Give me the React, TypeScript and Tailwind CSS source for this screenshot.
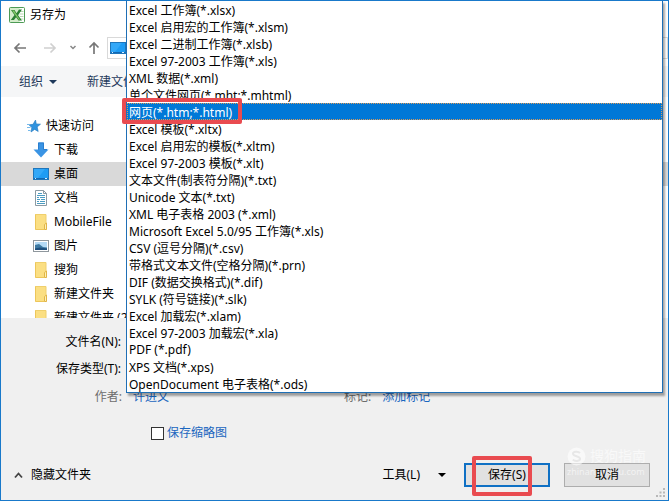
import { useState } from 'react';
import type { ReactNode } from 'react';

const FORMATS = [
  'Excel 工作簿(*.xlsx)',
  'Excel 启用宏的工作簿(*.xlsm)',
  'Excel 二进制工作簿(*.xlsb)',
  'Excel 97-2003 工作簿(*.xls)',
  'XML 数据(*.xml)',
  '单个文件网页(*.mht;*.mhtml)',
  '网页(*.htm;*.html)',
  'Excel 模板(*.xltx)',
  'Excel 启用宏的模板(*.xltm)',
  'Excel 97-2003 模板(*.xlt)',
  '文本文件(制表符分隔)(*.txt)',
  'Unicode 文本(*.txt)',
  'XML 电子表格 2003 (*.xml)',
  'Microsoft Excel 5.0/95 工作簿(*.xls)',
  'CSV (逗号分隔)(*.csv)',
  '带格式文本文件(空格分隔)(*.prn)',
  'DIF (数据交换格式)(*.dif)',
  'SYLK (符号链接)(*.slk)',
  'Excel 加载宏(*.xlam)',
  'Excel 97-2003 加载宏(*.xla)',
  'PDF (*.pdf)',
  'XPS 文档(*.xps)',
  'OpenDocument 电子表格(*.ods)',
];

function ExcelIcon() {
  return (
    <svg width="16" height="16" viewBox="0 0 16 16" fill="none">
      <rect x="0.5" y="0.5" width="15" height="15" rx="1" fill="#d3ecca" stroke="#4d9a55" />
      <path d="M10.500 1h4.500v14h-4.500z" fill="#fff" />
      <path d="M11 4.500h3.500M11 7h3.500M11 9.500h3.500M11 12h3.500" stroke="#b5d8b0" />
      <path d="M2 3h3.500l2 3.200L10 2.500h3L9 8.200l4 5.300H9.500L7.100 10.200 5 13H1.800l3.700-4.900z" fill="#2a7f33" />
      <path d="M3 3.500h2l6 9.300H9.800z" fill="#83c765" />
    </svg>
  );
}

function DesktopIcon() {
  return (
    <svg width="16" height="14" viewBox="0 0 16 14" fill="none" className="shrink-0">
      <rect x="0.5" y="1.500" width="15" height="11" fill="#1e9cf4" stroke="#1f76bb" />
      <path d="M1 2h11L5 11H1z" fill="#41b0fa" opacity="0.6" />
      <path d="M1 11.500h14" stroke="#1268b3" />
      <path d="M2 11.500h1M12 11.500h2" stroke="#d7efff" />
    </svg>
  );
}

function FolderIcon() {
  return (
    <svg width="16" height="16" viewBox="0 0 16 16" fill="none">
      <path d="M2 0.500h11v9l1 1v5H2z" fill="#fbdf83" />
      <path d="M2 0.500h11v9" stroke="#efcf6c" />
      <path d="M2.500 1v14.500h9" stroke="#edc65a" />
      <path d="M11.500 15.500v-5l2-1.500v6.500z" fill="#fff0b4" stroke="#e0b548" />
    </svg>
  );
}

function StarIcon() {
  return (
    <svg width="14" height="14" viewBox="0 0 14 14">
      <path d="M8.500 1l.8 3.900 4.200.3-3.300 2.700 1 4.600-3.600-2.100L4 13l.8-4.400L2 5.800l4-.5z" fill="#2f93df" stroke="#2478bd" strokeWidth="0.6" />
      <path d="M0 5.500h3M0 8.500h3.500M1 11.500h2.500" stroke="#76b9ea" />
    </svg>
  );
}

function DownloadIcon() {
  return (
    <svg width="16" height="16" viewBox="0 0 16 16">
      <path d="M5 .5h6v7h4.500L8 15.500.500 7.500H5z" fill="#3a94e4" />
      <path d="M5.500 7.500V1h5v6.500H14" stroke="#2a7fcf" fill="none" />
    </svg>
  );
}

function DocumentIcon() {
  return (
    <svg width="16" height="16" viewBox="0 0 16 16" fill="none">
      <path d="M2.500.5h8l3 3v12h-11z" fill="#fff" stroke="#8b9aa3" />
      <path d="M10.500.5v3h3" stroke="#8b9aa3" />
      <path d="M5 3.500h4M4 5.500h8M4 7.500h2M7 7.500h5M4 9.500h3M8 9.500h4M4 11.500h2M7 11.500h5M4 13.500h8" stroke="#4b9cc2" />
    </svg>
  );
}

function PictureIcon() {
  return (
    <svg width="16" height="14" viewBox="0 0 16 14" fill="none">
      <rect x="0.5" y="1.500" width="15" height="11" fill="#fff" stroke="#8f979d" />
      <path d="M2 3h12v8H2z" fill="#b4daf5" />
      <path d="M2 6l4-1 4 3 4 .5V11H2z" fill="#3e7aa3" />
      <path d="M2 9.500l5-1 7 1V11H2z" fill="#1f4f7d" />
    </svg>
  );
}

function Arrow({ dir, color }: { dir: 'left' | 'right' | 'up'; color: string }) {
  const paths = {
    left: 'M13 7H2M6.500 2.500L2 7l4.500 4.500',
    right: 'M1 7h11M7.500 2.500L12 7l-4.500 4.500',
    up: 'M7 13V2M2.500 6.500L7 2l4.500 4.500',
  };
  return (
    <svg width="14" height="14" viewBox="0 0 14 14" fill="none">
      <path d={paths[dir]} stroke={color} strokeWidth="1.700" />
    </svg>
  );
}

function Triangle() {
  return (
    <svg width="8" height="4" viewBox="0 0 8 4">
      <path d="M0 0h8L4 4z" fill="currentColor" />
    </svg>
  );
}

const PLACES: { icon: ReactNode; name: string; current?: boolean }[] = [
  { icon: <DownloadIcon />, name: '下载' },
  { icon: <DesktopIcon />, name: '桌面', current: true },
  { icon: <DocumentIcon />, name: '文档' },
  { icon: <FolderIcon />, name: 'MobileFile' },
  { icon: <PictureIcon />, name: '图片' },
  { icon: <FolderIcon />, name: '搜狗' },
  { icon: <FolderIcon />, name: '新建文件夹' },
  { icon: <FolderIcon />, name: '新建文件夹 (2)' },
];

function FormatList() {
  const [format, setFormat] = useState('网页(*.htm;*.html)');

  return (
    <div className="absolute -top-px right-[5px] left-[125px]">
      <select
        id="format"
        size={FORMATS.length}
        value={format}
        onChange={(e) => setFormat(e.target.value)}
        className="block w-full overflow-hidden border border-[#1f6fb5] bg-white p-0 text-black shadow-[2px_3px_2px_rgba(0,0,0,0.35)] outline-none"
      >
        {FORMATS.map((f) => (
          <option
            key={f}
            value={f}
            className="h-[17px] min-h-0 p-0 pl-0.5 leading-[17px] checked:bg-[linear-gradient(#0078d7,#0078d7)] checked:text-white! checked:outline-1 checked:-outline-offset-1 checked:outline-dotted checked:outline-[#d99a5a]"
          >
            {f}
          </option>
        ))}
      </select>
      <div className="pointer-events-none absolute top-[98px] -left-1 h-[26px] w-[120px] rounded-xs border-4 border-[#e94b50]" />
    </div>
  );
}

function Watermark() {
  return (
    <div className="pointer-events-none absolute right-0 bottom-2 flex w-[82px] flex-col text-white opacity-60">
      <div className="flex items-center gap-1">
        <svg width="19" height="19" viewBox="0 0 19 19" fill="none">
          <circle cx="9.500" cy="9.500" r="9" fill="currentColor" />
          <path d="M13 6c-2-2-7-1.500-7 .8 0 3 7 2 7 5 0 2.500-5 3-7.200.8" stroke="#e2e2e2" strokeWidth="2" />
        </svg>
        <span className="text-[14px] leading-5 whitespace-nowrap">搜狗指南</span>
      </div>
      <span className="text-[9px] leading-3">zhinan.sogou.com</span>
    </div>
  );
}

export default function App() {
  return (
    <main className="relative flex min-h-screen flex-col overflow-hidden border border-[#1979ca] bg-white font-['Noto_Sans','Noto_Sans_CJK_SC',sans-serif] text-[12px] leading-4 text-black">
      <header className="flex h-[30px] items-center gap-[5px] pb-0.5 pl-2">
        <ExcelIcon />
        <h1>另存为</h1>
      </header>

      <nav className="flex h-[35px] items-center pb-0.5 pl-3" aria-label="导航">
        <button aria-label="后退"><Arrow dir="left" color="#777" /></button>
        <button aria-label="前进" className="ml-4"><Arrow dir="right" color="#d0d0d0" /></button>
        <button aria-label="最近位置" className="ml-3">
          <svg width="8" height="6" viewBox="0 0 8 6" fill="none">
            <path d="M1.500 1L4 3.500 6.500 1" stroke="#888" strokeWidth="1.500" />
          </svg>
        </button>
        <button aria-label="上移" className="ml-2.5"><Arrow dir="up" color="#777" /></button>
        <button aria-label="桌面" className="ml-1.5 flex h-[22px] flex-1 items-center border border-[#d9d9d9] pl-0.5">
          <DesktopIcon />
        </button>
      </nav>

      <div className="flex h-[31px] items-center gap-[30px] bg-[#f5f6f7] pl-[18px] text-[#1e395b]">
        <button className="flex items-center gap-1.5">组织 <Triangle /></button>
        <button>新建文件夹</button>
      </div>

      <section className="h-[221px] overflow-hidden pt-[17px]">
        <a href="#quick" className="flex h-6 items-center gap-[5px] pl-[26px]">
          <StarIcon />
          快速访问
        </a>
        <ul>
          {PLACES.map((place) => (
            <li key={place.name}>
              <a
                href="#place"
                className={`flex h-6 items-center gap-[5px] pl-8 ${place.current ? 'bg-[#d9d9d9]' : ''}`}
              >
                {place.icon}
                {place.name}
              </a>
            </li>
          ))}
        </ul>
      </section>

      <form className="flex flex-1 flex-col bg-[#f0f0f0] pt-2.5" onSubmit={(e) => e.preventDefault()}>
        <div className="flex h-[27px] items-center gap-3 pr-3">
          <label htmlFor="filename" className="w-[120px] text-right">文件名(N):</label>
          <input id="filename" className="min-w-0 flex-1 border border-[#adadad] bg-white" />
        </div>
        <div className="flex h-[27px] items-center">
          <label htmlFor="format" className="w-[120px] text-right">保存类型(T):</label>
        </div>
        <div className="flex h-[29px] items-center gap-[11px]">
          <span className="w-[121px] text-right text-[#6d6d6d]">作者:</span>
          <button className="w-[200px] text-left text-[#1a66bf]">许进文</button>
          <span className="text-[#6d6d6d]">标记:</span>
          <button className="text-[#1a66bf]">添加标记</button>
        </div>
        <div className="mt-2.5 flex h-6 items-center gap-1 pl-[150px]">
          <input
            id="thumbnail"
            type="checkbox"
            className="size-[13px] appearance-none border border-[#333] bg-white checked:bg-[#0078d7]"
          />
          <label htmlFor="thumbnail" className="-ml-px text-[#1a66bf]">保存缩略图</label>
        </div>
        <div className="mt-[18px] mb-3 flex items-center pr-[18px] pl-[13px]">
          <button className="flex items-center gap-2">
            <svg width="9" height="7" viewBox="0 0 9 7" fill="none">
              <path d="M1 5.500l3.500-4 3.500 4" stroke="#444" strokeWidth="1.800" />
            </svg>
            隐藏文件夹
          </button>
          <button className="mr-[18px] ml-auto flex items-center gap-[18px]">工具(L) <Triangle /></button>
          <div className="relative">
            <button type="submit" className="h-6 w-[86px] border-2 border-[#0f70c4] bg-[#e1e1e1]">
              保存(S)
            </button>
            <div className="pointer-events-none absolute -top-[7px] left-2 h-10 w-[60px] rounded-xs border-4 border-[#e94b50]" />
          </div>
          <div className="relative ml-3.5 border border-[#adadad] bg-[#e1e1e1]">
            <Watermark />
            <button className="relative block h-[22px] w-[84px]">取消</button>
          </div>
        </div>
      </form>

      <svg width="10" height="10" viewBox="0 0 10 10" className="absolute right-0.5 bottom-0.5" fill="#b8b8b8">
        <path d="M7 0h2v2H7zM7 3.500h2v2H7zM3.500 3.500h2v2h-2zM7 7h2v2H7zM3.500 7h2v2h-2zM0 7h2v2H0z" />
      </svg>
      <FormatList />
    </main>
  );
}
